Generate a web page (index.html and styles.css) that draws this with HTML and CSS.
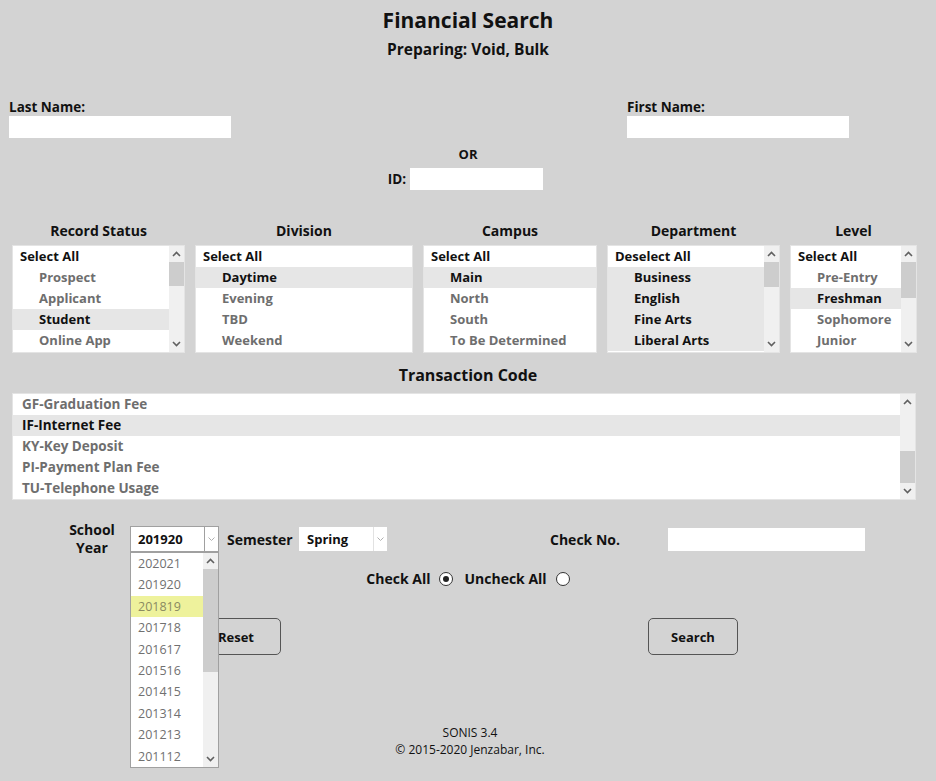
FILE: index.html
```html
<!DOCTYPE html>
<html lang="en">
<head>
    <meta charset="UTF-8">
    <title>Financial Search</title>
    <link rel="stylesheet" href="styles.css">
</head>
<body>
    <div class="page">
        <div class="page-head">
            <h1>Financial Search</h1>
            <h2>Preparing: Void, Bulk</h2>
        </div>

        <div class="name-row">
            <div class="name-field">
                <label>Last Name:</label>
                <input type="text" class="text-input name-input">
            </div>
            <div class="name-field">
                <label>First Name:</label>
                <input type="text" class="text-input name-input">
            </div>
        </div>

        <div class="or-label">OR</div>
        <div class="id-row">
            <label>ID:</label>
            <input type="text" class="text-input id-input">
        </div>

        <div class="lists">
            <div class="list-col col-status">
                <div class="list-title">Record Status</div>
                <div class="list-box">
                    <div class="list-opts">
                        <div class="opt head">Select All</div>
                        <div class="opt sub">Prospect</div>
                        <div class="opt sub">Applicant</div>
                        <div class="opt sub sel">Student</div>
                        <div class="opt sub">Online App</div>
                    </div>
                    <div class="scrollbar">
                        <div class="sb-btn"><svg width="9" height="6" viewBox="0 0 9 6"><polyline points="1,5 4.5,1.5 8,5" /></svg></div>
                        <div class="sb-track"><div class="sb-thumb thumb-24"></div></div>
                        <div class="sb-btn"><svg width="9" height="6" viewBox="0 0 9 6"><polyline points="1,1 4.5,4.5 8,1" /></svg></div>
                    </div>
                </div>
            </div>
            <div class="list-col col-division">
                <div class="list-title">Division</div>
                <div class="list-box">
                    <div class="list-opts">
                        <div class="opt head">Select All</div>
                        <div class="opt sub sel">Daytime</div>
                        <div class="opt sub">Evening</div>
                        <div class="opt sub">TBD</div>
                        <div class="opt sub">Weekend</div>
                    </div>
                </div>
            </div>
            <div class="list-col col-campus">
                <div class="list-title">Campus</div>
                <div class="list-box">
                    <div class="list-opts">
                        <div class="opt head">Select All</div>
                        <div class="opt sub sel">Main</div>
                        <div class="opt sub">North</div>
                        <div class="opt sub">South</div>
                        <div class="opt sub">To Be Determined</div>
                    </div>
                </div>
            </div>
            <div class="list-col col-dept">
                <div class="list-title">Department</div>
                <div class="list-box">
                    <div class="list-opts">
                        <div class="opt head">Deselect All</div>
                        <div class="opt sub sel">Business</div>
                        <div class="opt sub sel">English</div>
                        <div class="opt sub sel">Fine Arts</div>
                        <div class="opt sub sel">Liberal Arts</div>
                    </div>
                    <div class="scrollbar">
                        <div class="sb-btn"><svg width="9" height="6" viewBox="0 0 9 6"><polyline points="1,5 4.5,1.5 8,5" /></svg></div>
                        <div class="sb-track"><div class="sb-thumb thumb-25"></div></div>
                        <div class="sb-btn"><svg width="9" height="6" viewBox="0 0 9 6"><polyline points="1,1 4.5,4.5 8,1" /></svg></div>
                    </div>
                </div>
            </div>
            <div class="list-col col-level">
                <div class="list-title">Level</div>
                <div class="list-box">
                    <div class="list-opts">
                        <div class="opt head">Select All</div>
                        <div class="opt sub">Pre-Entry</div>
                        <div class="opt sub sel">Freshman</div>
                        <div class="opt sub">Sophomore</div>
                        <div class="opt sub">Junior</div>
                    </div>
                    <div class="scrollbar">
                        <div class="sb-btn"><svg width="9" height="6" viewBox="0 0 9 6"><polyline points="1,5 4.5,1.5 8,5" /></svg></div>
                        <div class="sb-track"><div class="sb-thumb thumb-36"></div></div>
                        <div class="sb-btn"><svg width="9" height="6" viewBox="0 0 9 6"><polyline points="1,1 4.5,4.5 8,1" /></svg></div>
                    </div>
                </div>
            </div>
        </div>

        <div class="trans-title">Transaction Code</div>
        <div class="list-box trans-box">
            <div class="list-opts">
                <div class="opt trans">GF-Graduation Fee</div>
                <div class="opt trans sel">IF-Internet Fee</div>
                <div class="opt trans">KY-Key Deposit</div>
                <div class="opt trans">PI-Payment Plan Fee</div>
                <div class="opt trans">TU-Telephone Usage</div>
            </div>
            <div class="scrollbar">
                <div class="sb-btn"><svg width="9" height="6" viewBox="0 0 9 6"><polyline points="1,5 4.5,1.5 8,5" /></svg></div>
                <div class="sb-track at-end"><div class="sb-thumb thumb-32"></div></div>
                <div class="sb-btn"><svg width="9" height="6" viewBox="0 0 9 6"><polyline points="1,1 4.5,4.5 8,1" /></svg></div>
            </div>
        </div>

        <div class="filter-row">
            <div class="year-label">School<br>Year</div>
            <div class="select-wrap">
                <div class="fake-select open">
                    <span class="select-value">201920</span>
                    <span class="select-arrow"><svg width="7" height="4" viewBox="0 0 7 4"><polyline points="0.5,0.5 3.5,3.5 6.5,0.5" /></svg></span>
                </div>
                <div class="dropdown">
                    <div class="dropdown-opts">
                        <div class="dd-opt">202021</div>
                        <div class="dd-opt">201920</div>
                        <div class="dd-opt hover">201819</div>
                        <div class="dd-opt">201718</div>
                        <div class="dd-opt">201617</div>
                        <div class="dd-opt">201516</div>
                        <div class="dd-opt">201415</div>
                        <div class="dd-opt">201314</div>
                        <div class="dd-opt">201213</div>
                        <div class="dd-opt">201112</div>
                    </div>
                    <div class="scrollbar">
                        <div class="sb-btn"><svg width="9" height="6" viewBox="0 0 9 6"><polyline points="1,5 4.5,1.5 8,5" /></svg></div>
                        <div class="sb-track"><div class="sb-thumb thumb-103"></div></div>
                        <div class="sb-btn"><svg width="9" height="6" viewBox="0 0 9 6"><polyline points="1,1 4.5,4.5 8,1" /></svg></div>
                    </div>
                </div>
            </div>
            <div class="semester-label">Semester</div>
            <div class="fake-select semester">
                <span class="select-value">Spring</span>
                <span class="select-arrow"><svg width="7" height="4" viewBox="0 0 7 4"><polyline points="0.5,0.5 3.5,3.5 6.5,0.5" /></svg></span>
            </div>
            <div class="check-label">Check No.</div>
            <input type="text" class="text-input check-input">
        </div>

        <div class="check-row">
            <span>Check All</span>
            <span class="radio checked"></span>
            <span class="uncheck">Uncheck All</span>
            <span class="radio"></span>
        </div>

        <div class="button-row">
            <button class="btn btn-reset">Reset</button>
            <button class="btn btn-search">Search</button>
        </div>

        <div class="footer">
            <div>SONIS 3.4</div>
            <div>&copy; 2015-2020 Jenzabar, Inc.</div>
        </div>
    </div>
</body>
</html>
```

FILE: styles.css
```css
body {
    margin: 0;
    background: #d3d3d3;
    font-family: "Open Sans", "Liberation Sans", sans-serif;
    color: #111;
}

.page {
    width: 936px;
    min-height: 781px;
    position: relative;
}

.page-head {
    text-align: center;
    padding-top: 8px;
}

.page-head h1 {
    margin: 0;
    font-size: 21px;
    line-height: 24px;
}

.page-head h2 {
    margin: 7px 0 0;
    font-size: 15.5px;
    line-height: 20px;
}

label {
    font-weight: bold;
    font-size: 13.5px;
}

.text-input {
    border: none;
    padding: 0;
    margin: 0;
    background: #fff;
    outline: none;
}

.name-row {
    display: flex;
    justify-content: space-between;
    padding: 0 87px 0 9px;
    margin-top: 40px;
}

.name-field label {
    display: block;
    line-height: 16px;
    margin-bottom: 1px;
}

.name-input {
    display: block;
    width: 222px;
    height: 22px;
}

.or-label {
    text-align: center;
    font-weight: bold;
    font-size: 13px;
    line-height: 16px;
    margin-top: 8px;
}

.id-row {
    display: flex;
    justify-content: center;
    align-items: center;
    gap: 4px;
    margin-top: 6px;
    padding-right: 5px;
}

.id-input {
    width: 133px;
    height: 22px;
}

/* select lists */
.lists {
    display: flex;
    gap: 10px;
    padding-left: 12px;
    margin-top: 32px;
}

.col-status { width: 173px; }
.col-division { width: 218px; }
.col-campus { width: 174px; }
.col-dept { width: 173px; }
.col-level { width: 127px; }

.list-title {
    text-align: center;
    font-weight: bold;
    font-size: 14px;
    line-height: 18px;
    margin-bottom: 5px;
}

.list-box {
    display: flex;
    height: 108px;
    box-sizing: border-box;
    background: #fff;
    border: 1px solid #e4e4e4;
}

.list-opts {
    flex: 1;
    min-width: 0;
}

.opt {
    height: 21px;
    line-height: 21px;
    font-size: 13px;
    font-weight: bold;
    color: #6e6e6e;
    white-space: nowrap;
    overflow: hidden;
}

.opt.head {
    padding-left: 7px;
    color: #111;
}

.opt.sub {
    padding-left: 26px;
}

.opt.trans {
    padding-left: 9px;
    font-size: 13.5px;
}

.opt.sel {
    background: #e6e6e6;
    color: #111;
}

/* scrollbars */
.scrollbar {
    width: 15px;
    display: flex;
    flex-direction: column;
    background: #f0f0f0;
}

.sb-btn {
    height: 16px;
    display: flex;
    align-items: center;
    justify-content: center;
}

.sb-btn svg polyline {
    fill: none;
    stroke: #606060;
    stroke-width: 1.6;
}

.sb-track {
    flex: 1;
    display: flex;
    flex-direction: column;
}

.sb-track.at-end {
    justify-content: flex-end;
}

.sb-thumb {
    background: #cdcdcd;
}

.thumb-24 { height: 24px; }
.thumb-25 { height: 25px; }
.thumb-32 { height: 32px; }
.thumb-36 { height: 36px; }
.thumb-103 { height: 103px; }

.trans-title {
    text-align: center;
    font-weight: bold;
    font-size: 16px;
    line-height: 20px;
    margin-top: 12px;
}

.trans-box {
    margin: 8px 0 0 12px;
    width: 904px;
    height: 107px;
}

/* school year / semester / check no */
.filter-row {
    display: flex;
    align-items: center;
    margin-top: 21px;
    font-weight: bold;
    font-size: 14px;
}

.year-label {
    width: 64px;
    margin-left: 60px;
    text-align: center;
    line-height: 18px;
}

.select-wrap {
    position: relative;
    margin-left: 6px;
}

.fake-select {
    display: flex;
    box-sizing: border-box;
    height: 26px;
    width: 89px;
    background: #fff;
    font-size: 13px;
}

.fake-select.open {
    border: 1px solid #a0a0a0;
}

.select-value {
    flex: 1;
    padding-left: 7px;
    line-height: 24px;
}

.select-arrow {
    width: 13px;
    border-left: 1px solid #a0a0a0;
    display: flex;
    align-items: center;
    justify-content: center;
}

.select-arrow svg polyline {
    fill: none;
    stroke: #b0b0b0;
    stroke-width: 1;
}

.fake-select.semester {
    width: 88px;
    height: 24px;
    margin-left: 8px;
}

.fake-select.semester .select-value {
    padding-left: 8px;
    line-height: 24px;
}

.fake-select.semester .select-arrow {
    width: 13px;
    border-left: 1px solid #e2e2e2;
}

.dropdown {
    position: absolute;
    top: 26px;
    left: 0;
    z-index: 5;
    width: 89px;
    height: 216px;
    box-sizing: border-box;
    border: 1px solid #a0a0a0;
    background: #fff;
    display: flex;
}

.dropdown-opts {
    flex: 1;
}

.dd-opt {
    height: 21.4px;
    line-height: 21.4px;
    padding-left: 7px;
    font-weight: normal;
    font-size: 12.5px;
    color: #707070;
}

.dd-opt.hover {
    background: #eef29c;
    color: #8a8a62;
}

.semester-label {
    margin-left: 8px;
    width: 64px;
}

.check-label {
    margin-left: 163px;
    width: 73px;
}

.check-input {
    margin-left: 45px;
    width: 197px;
    height: 23px;
}

/* radios */
.check-row {
    display: flex;
    justify-content: center;
    align-items: center;
    margin-top: 13px;
    font-weight: bold;
    font-size: 14px;
    line-height: 18px;
}

.radio {
    width: 14px;
    height: 14px;
    box-sizing: border-box;
    border: 1px solid #333;
    border-radius: 50%;
    background: #fff;
    margin-left: 9px;
    position: relative;
}

.radio.checked::after {
    content: "";
    position: absolute;
    left: 3px;
    top: 3px;
    width: 6px;
    height: 6px;
    border-radius: 50%;
    background: #222;
}

.uncheck {
    margin-left: 11px;
}

/* buttons */
.button-row {
    display: flex;
    margin-top: 30px;
}

.btn {
    width: 90px;
    height: 37px;
    background: transparent;
    border: 1px solid #555;
    border-radius: 5px;
    font-family: inherit;
    font-weight: bold;
    font-size: 13px;
    color: #111;
    padding: 0;
}

.btn-reset {
    margin-left: 191px;
}

.btn-search {
    margin-left: 367px;
}

.footer {
    text-align: center;
    font-size: 12px;
    line-height: 17px;
    margin-top: 69px;
    padding-left: 4px;
}
```
